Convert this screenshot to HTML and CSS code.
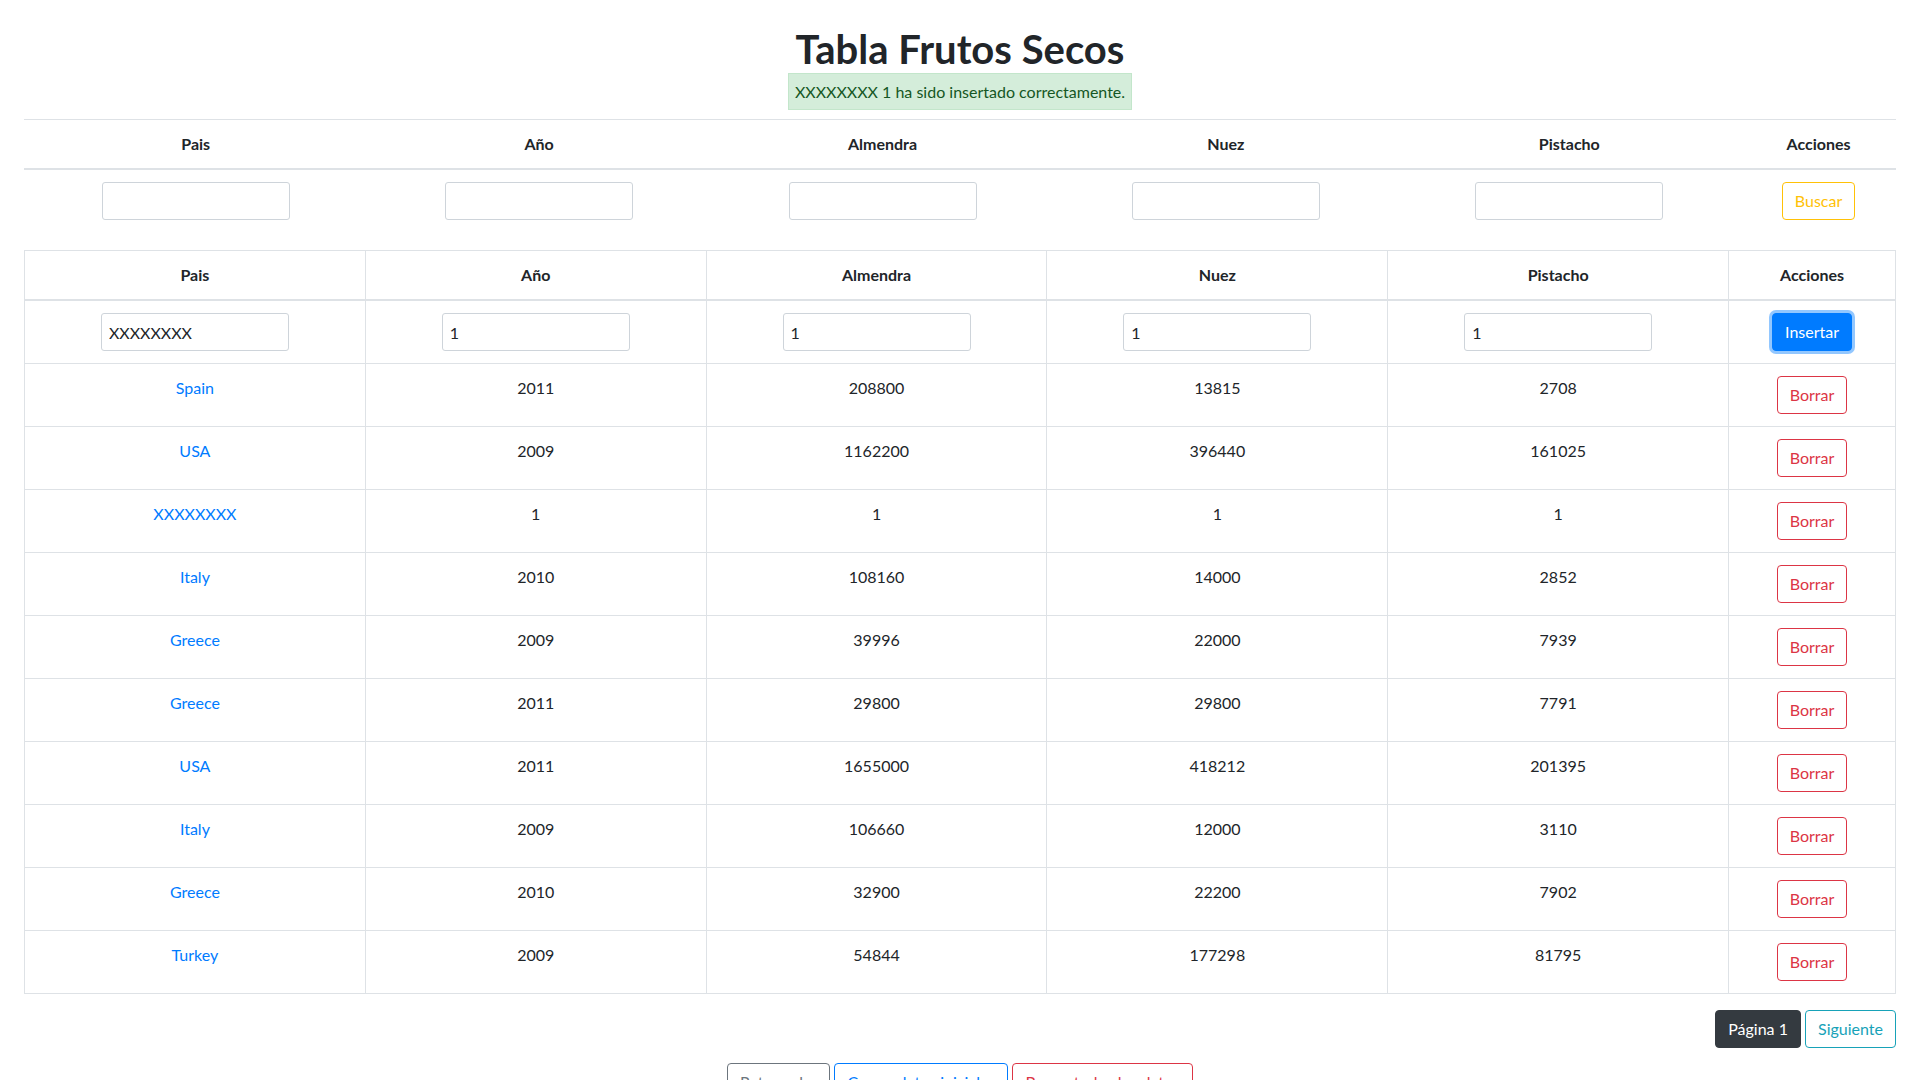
FILE: index.html
```html
<!DOCTYPE html>
<html lang="es">
<head>
<meta charset="utf-8">
<title>Tabla Frutos Secos</title>
<link rel="stylesheet" href="styles.css">
</head>
<body>
<div class="page">
  <header class="head">
    <h1 class="title">Tabla Frutos Secos</h1>
    <div class="alert">XXXXXXXX 1 ha sido insertado correctamente.</div>
  </header>

  <table class="tbl tbl-search">
    <colgroup><col class="c-data"><col class="c-data"><col class="c-data"><col class="c-data"><col class="c-data"><col class="c-act"></colgroup>
    <thead>
      <tr><th>Pais</th><th>Año</th><th>Almendra</th><th>Nuez</th><th>Pistacho</th><th>Acciones</th></tr>
    </thead>
    <tbody>
      <tr>
        <td><input class="field" type="text"></td>
        <td><input class="field" type="text"></td>
        <td><input class="field" type="text"></td>
        <td><input class="field" type="text"></td>
        <td><input class="field" type="text"></td>
        <td><button class="btn btn-o-warning">Buscar</button></td>
      </tr>
    </tbody>
  </table>

  <table class="tbl tbl-bordered">
    <colgroup><col class="c-data2"><col class="c-data2"><col class="c-data2"><col class="c-data2"><col class="c-data2"><col class="c-act2"></colgroup>
    <thead>
      <tr><th>Pais</th><th>Año</th><th>Almendra</th><th>Nuez</th><th>Pistacho</th><th>Acciones</th></tr>
    </thead>
    <tbody>
      <tr>
        <td><input class="field" type="text" value="XXXXXXXX"></td>
        <td><input class="field" type="text" value="1"></td>
        <td><input class="field" type="text" value="1"></td>
        <td><input class="field" type="text" value="1"></td>
        <td><input class="field" type="text" value="1"></td>
        <td><button class="btn btn-primary focus">Insertar</button></td>
      </tr>
      <tr><td><a class="link" href="#">Spain</a></td><td>2011</td><td>208800</td><td>13815</td><td>2708</td><td><button class="btn btn-o-danger">Borrar</button></td></tr>
      <tr><td><a class="link" href="#">USA</a></td><td>2009</td><td>1162200</td><td>396440</td><td>161025</td><td><button class="btn btn-o-danger">Borrar</button></td></tr>
      <tr><td><a class="link" href="#">XXXXXXXX</a></td><td>1</td><td>1</td><td>1</td><td>1</td><td><button class="btn btn-o-danger">Borrar</button></td></tr>
      <tr><td><a class="link" href="#">Italy</a></td><td>2010</td><td>108160</td><td>14000</td><td>2852</td><td><button class="btn btn-o-danger">Borrar</button></td></tr>
      <tr><td><a class="link" href="#">Greece</a></td><td>2009</td><td>39996</td><td>22000</td><td>7939</td><td><button class="btn btn-o-danger">Borrar</button></td></tr>
      <tr><td><a class="link" href="#">Greece</a></td><td>2011</td><td>29800</td><td>29800</td><td>7791</td><td><button class="btn btn-o-danger">Borrar</button></td></tr>
      <tr><td><a class="link" href="#">USA</a></td><td>2011</td><td>1655000</td><td>418212</td><td>201395</td><td><button class="btn btn-o-danger">Borrar</button></td></tr>
      <tr><td><a class="link" href="#">Italy</a></td><td>2009</td><td>106660</td><td>12000</td><td>3110</td><td><button class="btn btn-o-danger">Borrar</button></td></tr>
      <tr><td><a class="link" href="#">Greece</a></td><td>2010</td><td>32900</td><td>22200</td><td>7902</td><td><button class="btn btn-o-danger">Borrar</button></td></tr>
      <tr><td><a class="link" href="#">Turkey</a></td><td>2009</td><td>54844</td><td>177298</td><td>81795</td><td><button class="btn btn-o-danger">Borrar</button></td></tr>
    </tbody>
  </table>

  <div class="pager">
    <button class="btn btn-dark">Página 1</button>
    <button class="btn btn-o-info">Siguiente</button>
  </div>

  <div class="bottom-actions">
    <button class="btn btn-o-secondary">Retroceder</button>
    <button class="btn btn-o-primary">Cargar datos iniciales</button>
    <button class="btn btn-o-danger">Borrar todos los datos</button>
  </div>
</div>
</body>
</html>
```

FILE: styles.css
```css
html { scrollbar-width: none; }
html::-webkit-scrollbar { display: none; }
body {
  margin: 0;
  font-family: Lato, "Liberation Sans", sans-serif;
  font-size: 16px;
  line-height: 24px;
  color: #212529;
  background: #fff;
}
.page { padding: 0 24px; }
.head {
  display: flex;
  flex-direction: column;
  align-items: center;
}
.title {
  margin: 25px 0 0;
  font-size: 40px;
  line-height: 48px;
  font-weight: 700;
  color: #212529;
}
.alert {
  padding: 6px 6px 5px;
  border: 1px solid #c3e6cb;
  background: #d4edda;
  color: #155724;
  margin-bottom: 9px;
}
.tbl {
  width: 100%;
  border-collapse: collapse;
  table-layout: fixed;
  margin-bottom: 16px;
}
.c-data { width: 18.345%; }
.c-act { width: 8.275%; }
.c-data2 { width: 18.216%; }
.c-act2 { width: 8.92%; }
.tbl th, .tbl td {
  padding: 12px;
  text-align: center;
  vertical-align: top;
  border-top: 1px solid #dee2e6;
}
.tbl th { font-weight: 700; }
.tbl thead th { border-bottom: 2px solid #dee2e6; }
.tbl-search { margin-bottom: 18px; }
.tbl-bordered th, .tbl-bordered td { border: 1px solid #dee2e6; }
.tbl-bordered thead th { border-bottom-width: 2px; }
.field {
  box-sizing: border-box;
  width: 188px;
  height: 38px;
  padding: 0 7px;
  border: 1px solid #ced4da;
  border-radius: 3px;
  font: inherit;
  color: #212529;
  background: #fff;
  vertical-align: top;
}
.link { color: #007bff; text-decoration: none; }
.btn {
  display: inline-block;
  box-sizing: border-box;
  height: 38px;
  padding: 6px 12px;
  border: 1px solid transparent;
  border-radius: 4px;
  font: inherit;
  line-height: 24px;
  background: #fff;
  vertical-align: top;
  cursor: pointer;
}
.btn-primary { background: #007bff; border-color: #007bff; color: #fff; }
.focus { box-shadow: 0 0 0 3px rgba(38, 143, 255, 0.5); }
.btn-o-warning { color: #ffc107; border-color: #ffc107; }
.btn-o-danger { color: #dc3545; border-color: #dc3545; }
.btn-o-info { color: #17a2b8; border-color: #17a2b8; }
.btn-o-secondary { color: #6c757d; border-color: #6c757d; }
.btn-o-primary { color: #007bff; border-color: #007bff; }
.btn-dark { background: #343a40; border-color: #343a40; color: #fff; }
.pager { text-align: right; margin-bottom: 15px; }
.bottom-actions { text-align: center; }
```
